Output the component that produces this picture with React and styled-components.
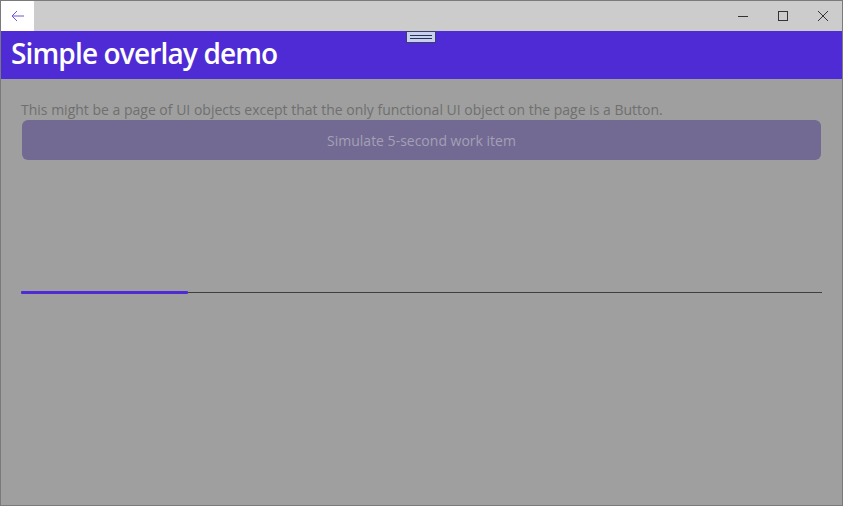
import styled, { createGlobalStyle } from "styled-components";

const GlobalStyle = createGlobalStyle`
  html, body {
    margin: 0;
    padding: 0;
    background: #ffffff;
  }
  * {
    box-sizing: border-box;
  }
`;

export default function App() {
  return (
    <>
      <GlobalStyle />
      <Window>
        <TitleBar>
          <BackButton aria-label="Back">
            <svg width="14" height="12" viewBox="0 0 14 12">
              <path
                d="M6 1 L1 6 L6 11 M1 6 H13"
                fill="none"
                stroke="#6a55e0"
                strokeWidth="1"
              />
            </svg>
          </BackButton>
          <DragHandle>
            <span />
            <span />
          </DragHandle>
          <Spacer />
          <CaptionButton aria-label="Minimize">
            <svg width="10" height="10" viewBox="0 0 10 10">
              <path d="M0 5.5 H10" stroke="#333" strokeWidth="1" />
            </svg>
          </CaptionButton>
          <CaptionButton aria-label="Maximize">
            <svg width="10" height="10" viewBox="0 0 10 10">
              <rect x="0.5" y="0.5" width="9" height="9" fill="none" stroke="#333" strokeWidth="1" />
            </svg>
          </CaptionButton>
          <CaptionButton aria-label="Close">
            <svg width="10" height="10" viewBox="0 0 10 10">
              <path d="M0 0 L10 10 M10 0 L0 10" stroke="#333" strokeWidth="1" />
            </svg>
          </CaptionButton>
        </TitleBar>
        <Header>
          <Title>Simple overlay demo</Title>
        </Header>
        <Content>
          <Description>
            This might be a page of UI objects except that the only functional UI object on the page is a Button.
          </Description>
          <WorkButton>Simulate 5-second work item</WorkButton>
          <Progress>
            <ProgressFill style={{ width: `${(167 / 801) * 100}%` }} />
          </Progress>
        </Content>
      </Window>
    </>
  );
}

const Window = styled.div`
  position: relative;
  width: 843px;
  height: 506px;
  border: 1px solid #7a7a7a;
  display: flex;
  flex-direction: column;
  background: #9f9f9f;
  overflow: hidden;
`;

const TitleBar = styled.div`
  height: 30px;
  display: flex;
  align-items: stretch;
  background: #cccccc;
`;

const BackButton = styled.button`
  width: 33px;
  border: none;
  padding: 0;
  background: #ffffff;
  display: flex;
  align-items: center;
  justify-content: center;
`;

const Spacer = styled.div`
  flex: 1;
`;

const CaptionButton = styled.button`
  width: 40px;
  border: none;
  padding: 0;
  background: transparent;
  display: flex;
  align-items: center;
  justify-content: center;

  &:last-child {
    width: 39px;
  }
`;

const DragHandle = styled.div`
  position: absolute;
  top: 30px;
  left: 405px;
  width: 30px;
  height: 12px;
  background: #c7d0ef;
  border: 1px solid #3b3f6e;
  display: flex;
  flex-direction: column;
  justify-content: center;
  align-items: center;
  gap: 2px;
  z-index: 2;

  span {
    display: block;
    width: 22px;
    height: 1px;
    background: #2c2f55;
  }
`;

const Header = styled.div`
  height: 48px;
  background: #4e2bd4;
  display: flex;
  align-items: flex-start;
  padding: 3px 0 0 10px;
`;

const Title = styled.h1`
  margin: 0;
  font-family: "Open Sans", "Noto Sans", sans-serif;
  font-weight: 600;
  font-size: 28px;
  line-height: 38px;
  color: #ffffff;
  letter-spacing: -0.85px;
`;

const Content = styled.div`
  padding: 21px 20px 0 20px;
  display: flex;
  flex-direction: column;
`;

const Description = styled.p`
  margin: 0;
  font-family: "Open Sans", "Noto Sans", sans-serif;
  font-size: 14px;
  line-height: 20px;
  color: #6f6f6f;
`;

const WorkButton = styled.button`
  margin: 0 0 0 1px;
  width: 799px;
  height: 40px;
  border: none;
  border-radius: 6px;
  background: #726a93;
  color: #a4a0b5;
  font-family: "Open Sans", "Noto Sans", sans-serif;
  font-size: 14px;
`;

const Progress = styled.div`
  margin-top: 131px;
  height: 3px;
  position: relative;
  display: flex;
  align-items: center;

  &::before {
    content: "";
    position: absolute;
    left: 0;
    right: 0;
    top: 1px;
    height: 1px;
    background: #3f3f3f;
  }
`;

const ProgressFill = styled.div`
  position: relative;
  height: 3px;
  background: #4e2bd4;
  border-radius: 1px;
`;
